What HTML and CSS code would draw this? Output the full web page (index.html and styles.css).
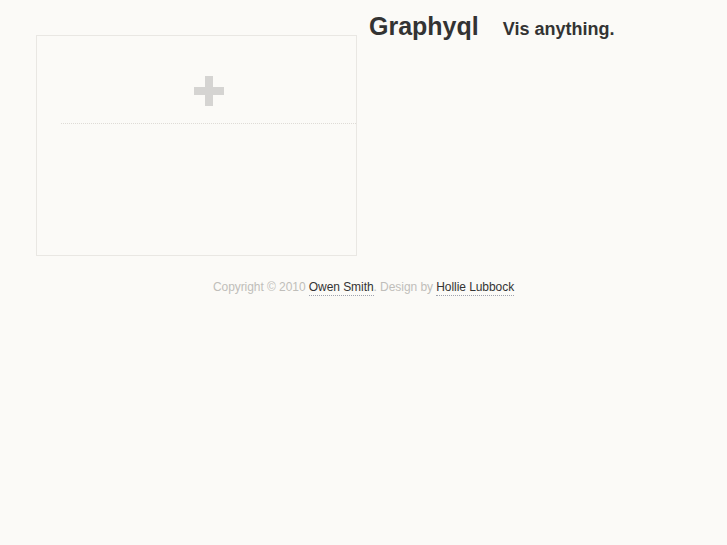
FILE: index.html
```html
<!DOCTYPE html>
<html>
<head>
<meta charset="utf-8">
<link rel="stylesheet" href="styles.css">
</head>
<body>
<div class="page">
  <div class="top">
    <div class="panel">
      <div class="panel-head">
        <div class="plus" aria-label="Add"></div>
      </div>
    </div>
    <div class="header">
      <h1 class="title">Graphyql</h1>
      <span class="tagline">Vis anything.</span>
    </div>
  </div>
  <p class="footer">Copyright © 2010 <a href="#">Owen Smith</a>. Design by <a href="#">Hollie Lubbock</a></p>
</div>
</body>
</html>
```
FILE: styles.css
```css
html, body {
  margin: 0;
  padding: 0;
  background: #fbfaf7;
}
body {
  font-family: "Liberation Sans", Arial, sans-serif;
  color: #333;
}
.page {
  width: 727px;
}
.top {
  display: flex;
  align-items: flex-start;
  padding-left: 36px;
  padding-top: 35px;
}
.panel {
  width: 319px;
  height: 219px;
  border: 1px solid #e9e7e3;
  flex: none;
}
.panel-head {
  margin-left: 24px;
  height: 88px;
  border-bottom: 1px dotted #dedbd6;
  display: flex;
  justify-content: center;
  padding-top: 40px;
  box-sizing: border-box;
}
.plus {
  position: relative;
  width: 30px;
  height: 30px;
}
.plus::before,
.plus::after {
  content: "";
  position: absolute;
  background: #d5d4d2;
}
.plus::before {
  left: 11px;
  top: 0;
  width: 8px;
  height: 30px;
}
.plus::after {
  left: 0;
  top: 11px;
  width: 30px;
  height: 8px;
}
.header {
  display: flex;
  align-items: baseline;
  margin-left: 12px;
  margin-top: -24px;
}
.title {
  margin: 0;
  font-size: 25px;
  font-weight: bold;
  color: #333;
  line-height: 30px;
}
.tagline {
  margin-left: 24px;
  font-size: 18px;
  font-weight: bold;
  color: #333;
}
.footer {
  margin: 23px 0 0;
  text-align: center;
  font-size: 12px;
  letter-spacing: -0.06px;
  color: #c0beba;
  line-height: 16px;
}
.footer a {
  display: inline-block;
  color: #333;
  text-decoration: none;
  line-height: 15px;
  border-bottom: 1px dotted #9fa2ad;
}
```
